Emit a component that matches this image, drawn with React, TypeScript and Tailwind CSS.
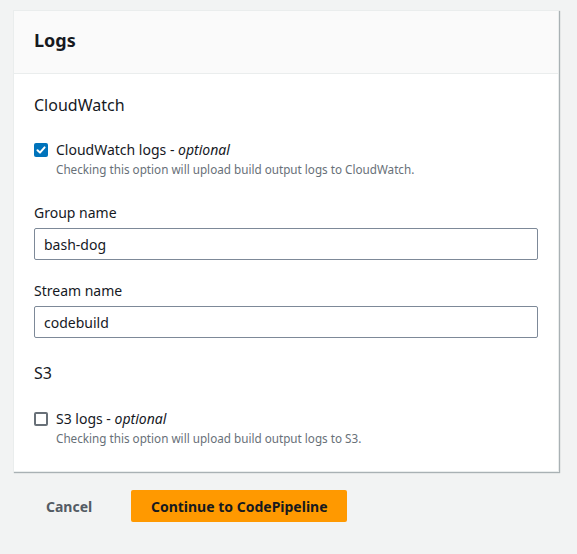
import React from "react";

const font = { fontFamily: '"Noto Sans", "Open Sans", sans-serif' };

function Checkbox({ checked }: { checked: boolean }) {
  if (checked) {
    return (
      <div className="w-[14px] h-[14px] rounded-[2px] bg-[#0073bb] flex items-center justify-center shrink-0">
        <svg width="12" height="12" viewBox="0 0 12 12" fill="none">
          <path d="M2.5 6.2L5 8.6L9.6 3.4" stroke="white" strokeWidth="2" strokeLinecap="round" strokeLinejoin="round" />
        </svg>
      </div>
    );
  }
  return <div className="w-[14px] h-[14px] rounded-[2px] border-2 border-[#687078] bg-white shrink-0" />;
}

function CheckRow({ checked, label, desc }: { checked: boolean; label: string; desc: string }) {
  return (
    <div className="flex gap-2">
      <div className="pt-[4px]">
        <Checkbox checked={checked} />
      </div>
      <div className="flex flex-col">
        <div className="text-[14px] leading-[22px] text-[#16191f]">
          {label} - <span className="italic">optional</span>
        </div>
        <div className="text-[11.7px] leading-[16px] text-[#687078]">{desc}</div>
      </div>
    </div>
  );
}

function Field({ label, value }: { label: string; value: string }) {
  return (
    <div className="flex flex-col">
      <div className="text-[14px] leading-[22px] text-[#16191f]">{label}</div>
      <div className="mt-[4px] h-[32px] border border-[#7d8998] rounded-[2px] bg-white flex items-center pl-[9px] text-[14px] text-[#16191f]">
        {value}
      </div>
    </div>
  );
}

export default function App() {
  return (
    <div className="min-h-[554px] bg-[#f2f3f3] pt-[10px] pl-[13px] pr-[18px]" style={font}>
      <div className="w-[546px] bg-white border border-[#eaeded] shadow-[1px_1px_1px_0_rgba(0,28,36,0.3)]">
        <div className="h-[63px] bg-[#fafafa] border-b border-[#eaeded] px-[20px] pb-[3px] flex items-center">
          <h2 className="text-[18px] font-bold text-[#16191f]">Logs</h2>
        </div>
        <div className="px-[20px] pt-[20px] pb-[25px] flex flex-col">
          <div className="text-[16px] leading-[22px] text-[#16191f]">CloudWatch</div>
          <div className="mt-[23px]">
            <CheckRow checked label="CloudWatch logs" desc="Checking this option will upload build output logs to CloudWatch." />
          </div>
          <div className="mt-[25px]">
            <Field label="Group name" value="bash-dog" />
          </div>
          <div className="mt-[20px]">
            <Field label="Stream name" value="codebuild" />
          </div>
          <div className="mt-[24px] text-[16px] leading-[22px] text-[#16191f]">S3</div>
          <div className="mt-[24px]">
            <CheckRow checked={false} label="S3 logs" desc="Checking this option will upload build output logs to S3." />
          </div>
        </div>
      </div>
      <div className="flex items-center mt-[18px] pl-[13px]">
        <button className="px-[20px] h-[32px] text-[14px] font-bold text-[#545b64]">Cancel</button>
        <button className="ml-[19px] w-[216px] h-[32px] rounded-[2px] bg-[#ff9900] text-[14px] font-bold text-[#16191f]">
          Continue to CodePipeline
        </button>
      </div>
    </div>
  );
}
